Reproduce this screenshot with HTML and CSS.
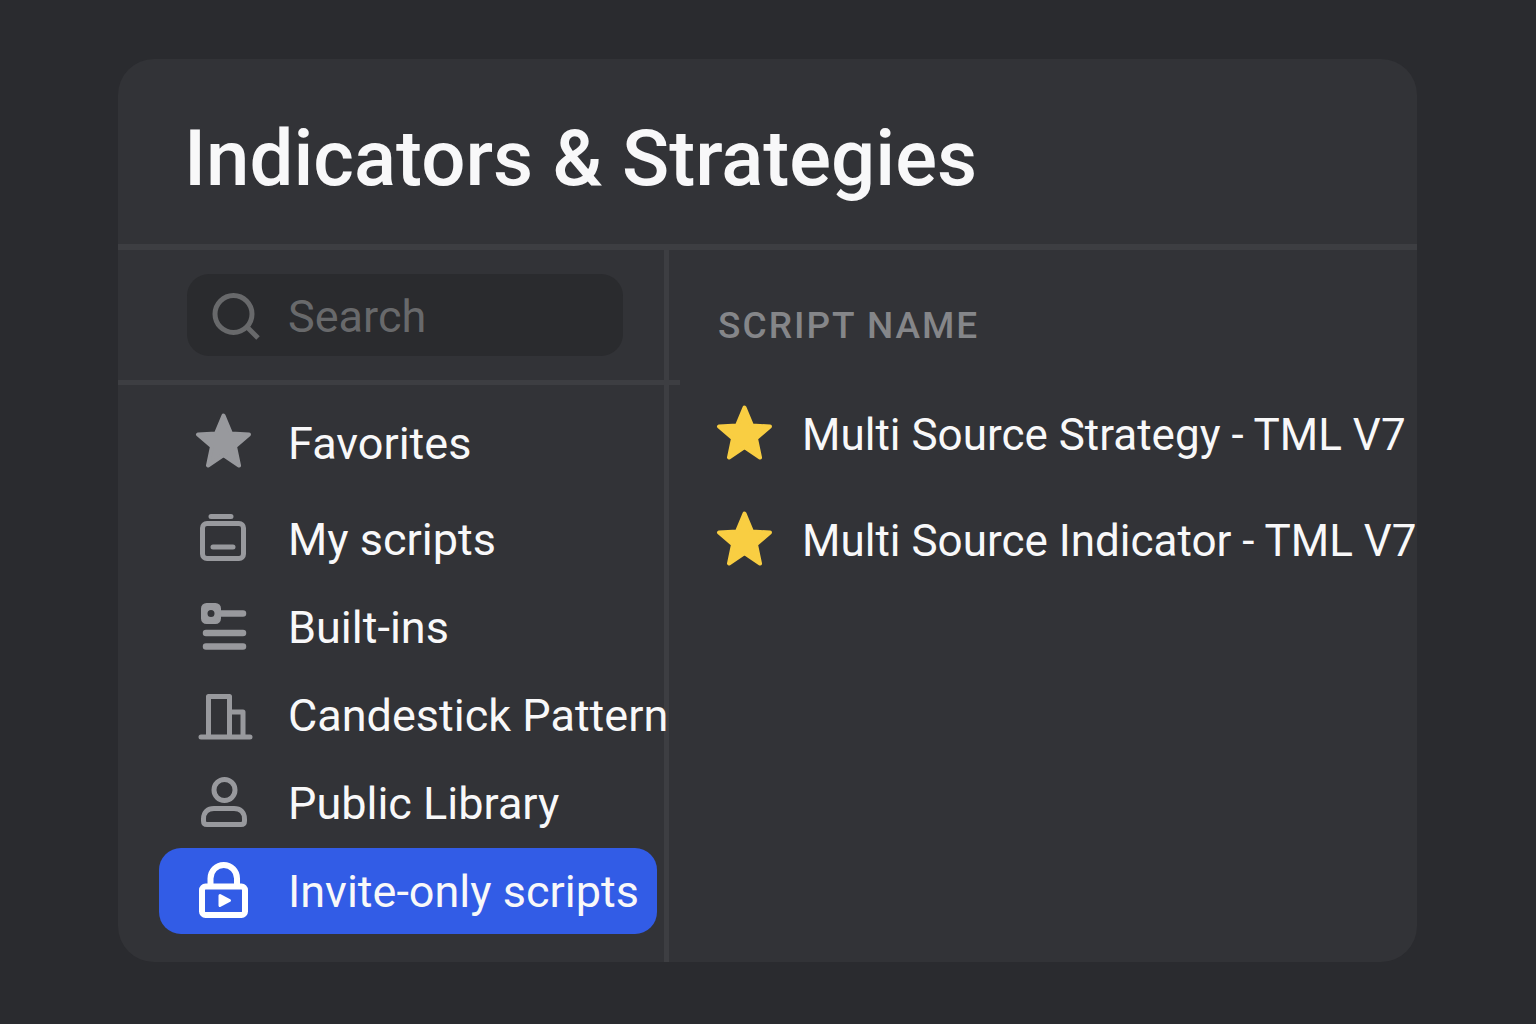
FILE: index.html
```html
<!DOCTYPE html>
<html lang="en">
<head>
  <meta charset="UTF-8" />
  <meta name="viewport" content="width=device-width, initial-scale=1.0"/>
  <title>Indicators &amp; Strategies</title>
  <link rel="stylesheet" href="styles.css">
</head>
<body>
  <main class="panel">
    <header class="panel-header">
      <h1>Indicators &amp; Strategies</h1>
    </header>

    <div class="panel-body">
      <!-- left column -->
      <aside class="sidebar">
        <div class="search-area">
          <label class="search-box" for="searchInput">
            <svg class="search-icon" viewBox="0 0 48 48" aria-hidden="true">
              <circle cx="21.5" cy="22" r="18.5"/>
              <path d="M34.5 34.5L46 46"/>
            </svg>
            <input id="searchInput" type="text" placeholder="Search" aria-label="Search">
          </label>
        </div>

        <nav class="menu">
          <a href="#favorites" class="menu-item favorites">
            <svg class="icon icon-star" viewBox="0 0 60 60" aria-hidden="true">
              <path d="M30.5 2.5L38 20.5L56 21.5L42 33.5L46 52.5L30.5 42L15 52.5L19 33.5L5 21.5L23 20.5Z"/>
            </svg>
            <span>Favorites</span>
          </a>
          <a href="#my-scripts" class="menu-item">
            <svg class="icon" viewBox="0 0 60 60" aria-hidden="true">
              <path d="M18 7.5H38M20 38H40"/>
              <rect x="9.5" y="14.5" width="41" height="35" rx="4.5"/>
            </svg>
            <span>My scripts</span>
          </a>
          <a href="#built-ins" class="menu-item">
            <svg class="icon" viewBox="0 0 60 60" aria-hidden="true">
              <circle cx="18" cy="16.5" r="6.5" stroke-width="6"/>
              <rect x="10.5" y="8.5" width="15" height="16" rx="3"/>
              <path d="M28 16.5H50M13 36H50M13 49.5H50" stroke-width="6.5"/>
            </svg>
            <span>Built-ins</span>
          </a>
          <a href="#patterns" class="menu-item">
            <svg class="icon" viewBox="0 0 60 60" aria-hidden="true">
              <path d="M15.5 52V11.5H36.5V52M36.5 27H50V52M8 52H57"/>
            </svg>
            <span>Candestick Pattern</span>
          </a>
          <a href="#public-library" class="menu-item">
            <svg class="icon" viewBox="0 0 60 60" aria-hidden="true">
              <circle cx="31.5" cy="17" r="10.5"/>
              <path d="M10.5 48V46C10.5 39 15 35.5 21 35.5H41C47 35.5 51.5 39 51.5 46V48Q51.5 51.5 48 51.5H14Q10.5 51.5 10.5 48Z"/>
            </svg>
            <span>Public Library</span>
          </a>
          <a href="#invite-only" class="menu-item active" aria-current="page">
            <svg class="icon" viewBox="0 0 60 60" aria-hidden="true">
              <rect x="9" y="25.5" width="43" height="28.5" rx="3.5"/>
              <path d="M17.5 25V17.5A13.25 13.5 0 0 1 44 17.5V25"/>
              <path class="play" d="M27 34.5L36.5 39.5L27 44.5Z"/>
            </svg>
            <span>Invite-only scripts</span>
          </a>
        </nav>
      </aside>

      <!-- right column -->
      <section class="scripts">
        <table>
          <thead>
            <tr><th scope="col" colspan="2">SCRIPT NAME</th></tr>
          </thead>
          <tbody>
            <tr>
              <td class="star-cell">
                <button type="button" class="star-button" aria-label="Remove from favorites">
                  <svg class="icon icon-star" viewBox="0 0 60 60" aria-hidden="true">
                    <path d="M30.5 2.5L38 20.5L56 21.5L42 33.5L46 52.5L30.5 42L15 52.5L19 33.5L5 21.5L23 20.5Z"/>
                  </svg>
                </button>
              </td>
              <td>Multi Source Strategy - TML V7</td>
            </tr>
            <tr>
              <td class="star-cell">
                <button type="button" class="star-button" aria-label="Remove from favorites">
                  <svg class="icon icon-star" viewBox="0 0 60 60" aria-hidden="true">
                    <path d="M30.5 2.5L38 20.5L56 21.5L42 33.5L46 52.5L30.5 42L15 52.5L19 33.5L5 21.5L23 20.5Z"/>
                  </svg>
                </button>
              </td>
              <td>Multi Source Indicator - TML V7</td>
            </tr>
          </tbody>
        </table>
      </section>
    </div>
  </main>
</body>
</html>
```
FILE: styles.css
```css
* {
  box-sizing: border-box;
}

body {
  margin: 0;
  padding: 59px 119px 59px 118px;
  background-color: #2a2b2f;
  color: #f8f8f9;
  font-family: Roboto, "Liberation Sans", sans-serif;
  font-size: 45px;
  line-height: 56px;
}

.panel {
  background-color: #323337;
  border-radius: 36px;
  overflow: hidden;
}

.panel-header {
  padding: 56px 66px 41px;
  border-bottom: 6px solid #3d3e42;
}

h1 {
  margin: 0;
  font-size: 78px;
  font-weight: 500;
  line-height: 88px;
}

.panel-body {
  display: grid;
  grid-template-columns: minmax(0, 14fr) minmax(0, 19fr);
}

.sidebar {
  border-right: 5px solid #3d3e42;
}

.search-area {
  position: relative;
  padding: 24px 41px 24px 69px;
  border-bottom: 5px solid #3d3e42;
}

/* short end of the line past the column divider */
.search-area::after {
  content: "";
  position: absolute;
  right: -16px;
  bottom: -5px;
  width: 16px;
  height: 5px;
  background-color: #3d3e42;
}

.search-box {
  display: flex;
  align-items: center;
  gap: 28px;
  height: 82px;
  padding: 2px 24px 0 25px;
  background-color: #2a2b2e;
  border-radius: 22px;
}

.search-icon {
  flex: none;
  width: 48px;
  height: 48px;
  fill: none;
  stroke: #68696b;
  stroke-width: 5;
}

.search-box input {
  flex: 1;
  min-width: 0;
  padding: 2px 0 0;
  border: 0;
  outline: 0;
  background: none;
  color: #f8f8f9;
  font: inherit;
}

.search-box input::placeholder {
  color: #68696b;
  opacity: 1;
}

.menu {
  display: flex;
  flex-direction: column;
  gap: 2px;
  padding: 15px 7px 28px 41px;
}

.menu-item {
  display: flex;
  align-items: center;
  gap: 35px;
  height: 86px;
  padding-left: 34px;
  border-radius: 22px;
  color: inherit;
  text-decoration: none;
  white-space: nowrap;
}

.menu-item.favorites {
  margin-bottom: 8px;
}

.menu-item.active {
  background-color: #325ce6;
}

/* long names run over the column divider */
.menu-item span {
  position: relative;
  padding-top: 2px;
}

.icon {
  display: block;
  flex: none;
  width: 60px;
  height: 60px;
  fill: none;
  stroke: #98999d;
  stroke-width: 5;
  stroke-linecap: round;
  stroke-linejoin: round;
}

.icon-star {
  fill: #98999d;
  stroke-width: 4;
}

.active .icon {
  stroke: #fff;
  stroke-width: 6;
}

.active .play {
  fill: #fff;
  stroke-width: 3;
}

.scripts {
  padding: 48px 0 0 45px;
}

table {
  border-collapse: collapse;
  white-space: nowrap;
}

th {
  height: 56px;
  padding: 0 0 28px 4px;
  color: #858689;
  font-size: 37px;
  font-weight: 500;
  letter-spacing: 2px;
  text-align: left;
}

td {
  height: 106px;
  padding: 0;
  font-size: 44px;
}

.star-cell {
  padding-right: 28px;
}

.star-button {
  display: block;
  padding: 0;
  border: 0;
  background: none;
  cursor: pointer;
}

.star-button .icon {
  fill: #f9ce42;
  stroke: #f9ce42;
}
```
